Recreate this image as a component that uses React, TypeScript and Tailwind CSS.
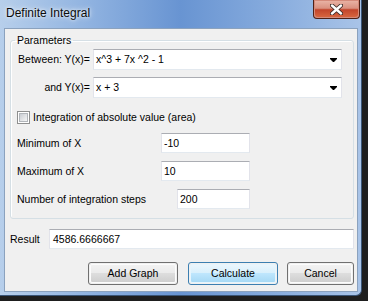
import React from 'react';

const inputBox =
  'bg-white border border-[#e2e3ea] border-t-[#abadb3] border-b-[#e3e9ef] flex items-center pl-[2px] text-black';

const Combo: React.FC<{ value: string }> = ({ value }) => (
  <div className={`${inputBox} w-[249px] h-[21px] pr-[4px]`}>
    <span className="flex-1 whitespace-nowrap">{value}</span>
    <svg width="7" height="5" viewBox="0 0 7 5" className="mt-[1px]">
      <path d="M0 0h7v1l-3 3h-1l-3-3z" fill="#000" />
    </svg>
  </div>
);

const Button: React.FC<{ label: string; primary?: boolean; className?: string }> = ({
  label,
  primary,
  className = '',
}) => (
  <div
    className={`h-[23px] rounded-[3px] border p-[1px] ${
      primary ? 'border-[#3c7fb1]' : 'border-[#707070]'
    } ${className}`}
  >
    <div
      className={`h-full rounded-[2px] flex items-center justify-center border ${
        primary
          ? 'border-[#e6f5fd] bg-[linear-gradient(to_bottom,#eaf6fd_0%,#d9f0fc_45%,#bee6fd_50%,#a7d9f5_100%)]'
          : 'border-[#fcfcfc] bg-[linear-gradient(to_bottom,#f2f2f2_0%,#ebebeb_45%,#dddddd_50%,#cfcfcf_100%)]'
      }`}
    >
      {label}
    </div>
  </div>
);

export default function App() {
  return (
    <div
      className="w-[368px] h-[301px] bg-[#1e1e1e] overflow-hidden text-[10.5px] leading-[13px] text-black"
      style={{ fontFamily: '"Liberation Sans", Arial, sans-serif' }}
    >
      <div className="w-[362px] h-[296px] flex flex-col rounded-br-[6px] border-r border-b border-[#3a5577] bg-[linear-gradient(to_right,#b7cfeb_0%,#8fb2e0_25%,#6894d2_50%,#86abdd_75%,#a9c4e8_100%)]">
        {/* Title bar */}
        <div className="h-[28px] flex items-start shrink-0">
          <span className="mt-[6px] ml-[6px] text-[12px] leading-[14px] text-[#0b0b0b] [text-shadow:0_0_6px_rgba(255,255,255,0.9),0_0_3px_rgba(255,255,255,0.8)]">
            Definite Integral
          </span>
          <div className="ml-auto mr-[1px] w-[47px] h-[19px] rounded-b-[4px] border border-t-0 border-[#4f2117] p-[1px] bg-[#d48a7a]">
            <div className="w-full h-full rounded-b-[3px] flex items-center justify-center bg-[linear-gradient(to_bottom,#e8b1a3_0%,#d99180_45%,#c2452b_55%,#d6653f_100%)]">
              <svg width="13" height="11" viewBox="0 0 13 11">
                <path d="M2 1.5 L11 9.5 M11 1.5 L2 9.5" stroke="#3b2a26" strokeWidth="4.2" strokeLinecap="round" />
                <path d="M2 1.5 L11 9.5 M11 1.5 L2 9.5" stroke="#ffffff" strokeWidth="2.4" strokeLinecap="round" />
              </svg>
            </div>
          </div>
        </div>

        {/* Client area */}
        <div className="ml-[4px] w-[354px] h-[264px] border border-[#8ba2be] bg-[#f0f0f0] flex flex-col">
          <fieldset className="mt-[5px] ml-[5px] w-[344px] border border-[#d5dfe5] rounded-[3px] pl-[6px] pb-[9px] shadow-[inset_1px_1px_0_#ffffff]">
            <legend className="ml-[-2px] px-[2px] leading-[13px]">Parameters</legend>

            <div className="mt-[2px] h-[21px] flex items-center">
              <span className="w-[76px] pr-[3px] text-right whitespace-nowrap">Between: Y(x)=</span>
              <Combo value="x^3 + 7x ^2 - 1" />
            </div>
            <div className="mt-[7px] h-[21px] flex items-center">
              <span className="w-[76px] pr-[3px] text-right whitespace-nowrap">and Y(x)=</span>
              <Combo value="x + 3" />
            </div>

            <div className="mt-[13px] h-[13px] flex items-center gap-[3px]">
              <div className="w-[13px] h-[13px] border border-[#8e8f8f] bg-white p-[1px]">
                <div className="w-full h-full border border-[#b1b5ba] bg-gradient-to-br from-[#c9cdd3] to-[#f6f6f6]" />
              </div>
              <span className="whitespace-nowrap">Integration of absolute value (area)</span>
            </div>

            <div className="mt-[9px] h-[20px] flex items-center">
              <span className="w-[144px]">Minimum of X</span>
              <div className={`${inputBox} w-[89px] h-[20px]`}>-10</div>
            </div>
            <div className="mt-[8px] h-[20px] flex items-center">
              <span className="w-[144px]">Maximum of X</span>
              <div className={`${inputBox} w-[89px] h-[20px]`}>10</div>
            </div>
            <div className="mt-[8px] h-[20px] flex items-center">
              <span className="w-[160px] whitespace-nowrap">Number of integration steps</span>
              <div className={`${inputBox} w-[73px] h-[20px]`}>200</div>
            </div>
          </fieldset>

          <div className="mt-[10px] ml-[5px] h-[20px] flex items-center">
            <span className="w-[39px]">Result</span>
            <div className={`${inputBox} w-[305px] h-[20px] pl-[3px]`}>4586.6666667</div>
          </div>

          <div className="mt-[13px] ml-[5px] w-[344px] flex justify-end">
            <Button label="Add Graph" className="w-[90px] mr-[10px]" />
            <Button label="Calculate" primary className="w-[90px] mr-[9px]" />
            <Button label="Cancel" className="w-[67px]" />
          </div>
        </div>
      </div>
    </div>
  );
}
